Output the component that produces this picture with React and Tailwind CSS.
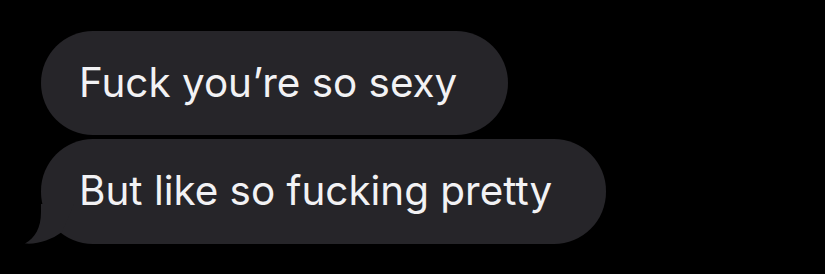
export default function App() {
  return (
    <div className="flex h-[274px] w-[825px] flex-col items-start gap-[4px] bg-black pl-[41px] pt-[31px] font-['Inter','Liberation_Sans',sans-serif]">
      <div className="flex h-[104px] items-center rounded-[52px] bg-[#262529] pl-[38px] pr-[51px] text-[40.4px] leading-none text-[#f2f2f4]">
        Fuck you’re so sexy
      </div>
      <div className="relative flex h-[105px] items-center rounded-[52px] bg-[#262529] pl-[38px] pr-[54px] text-[40.4px] leading-none text-[#f2f2f4]">
        <svg
          className="absolute bottom-0 left-[-19px]"
          width="60"
          height="40"
          viewBox="0 0 60 40"
          fill="#262529"
        >
          <path d="M19 0 L19 8 C19 24 13 34 3 39.5 C16 40.5 29 36 40 28 L52 0 Z" />
        </svg>
        <span className="relative">But like so fucking pretty</span>
      </div>
    </div>
  );
}
